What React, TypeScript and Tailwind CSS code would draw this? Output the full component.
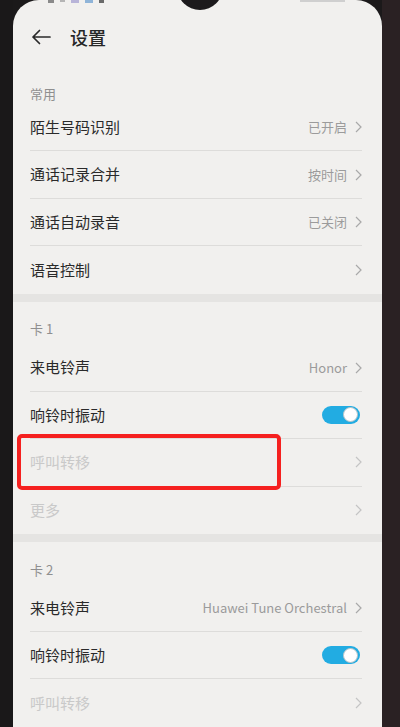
import React from "react";

const font = { fontFamily: '"Noto Sans CJK SC", "Noto Sans", Roboto, sans-serif' };

function Chevron({ light }: { light?: boolean }) {
  return (
    <svg width="7" height="12" viewBox="0 0 7 12" className="shrink-0">
      <path d="M1 1 L6 6 L1 11" fill="none" stroke={light ? "#c4c4c4" : "#a9a9a9"} strokeWidth="1.2" />
    </svg>
  );
}

function Toggle() {
  return (
    <div className="w-[38px] h-[18px] rounded-full bg-[#22ace2] flex items-center justify-end pr-[2px] mr-[2px]">
      <div className="w-[15px] h-[15px] rounded-full bg-white border border-[#b9c4c8]" />
    </div>
  );
}

type Row = { label: string; value?: string; toggle?: boolean; disabled?: boolean; last?: boolean };

function SettingRow({ label, value, toggle, disabled, last }: Row) {
  return (
    <div className="h-[47.5px] pl-[17px] pr-[20px]">
      <div className={`h-full flex items-center ${last ? "" : "border-b border-[#dddcda]"}`}>
        <span className={`text-[15px] flex-1 ${disabled ? "text-[#c9c9c9]" : "text-[#2a2a2a]"}`}>{label}</span>
        {toggle ? (
          <Toggle />
        ) : (
          <div className="flex items-center gap-[8px]">
            {value && <span className="text-[13px] text-[#9b9b9b]">{value}</span>}
            <Chevron light={disabled} />
          </div>
        )}
      </div>
    </div>
  );
}

function SectionHeader({ text }: { text: string }) {
  return (
    <div className="h-[42.5px] pl-[17px] flex items-end pb-[9px]">
      <span className="text-[13px] leading-[13px] text-[#8f8f8f]">{text}</span>
    </div>
  );
}

export default function App() {
  return (
    <div className="w-[400px] h-[727px] flex bg-[#1b191a] overflow-hidden" style={font}>
      <div className="w-[13px] bg-[#1a1819]" />
      <div className="flex-1 relative bg-[#f1f0ee] rounded-t-[26px] overflow-hidden flex flex-col">
        {/* notch */}
        <div className="absolute left-[164px] top-[-36px] w-[46px] h-[46px] rounded-full bg-[#1c1a1c]" />
        {/* status bar hints */}
        <div className="absolute left-[35px] top-0 flex gap-[6px]">
          <div className="w-[6px] h-[3px] bg-[#8a8a8a]" />
          <div className="w-[5px] h-[2px] bg-[#b5b5b5]" />
          <div className="w-[8px] h-[3px] bg-[#b8b4d8]" />
          <div className="w-[8px] h-[3px] bg-[#8fb4d8]" />
          <div className="w-[5px] h-[3px] bg-[#6a6a6a]" />
        </div>
        <div className="absolute left-[287px] top-0 w-[45px] h-[2px] bg-[#cfcfcf]" />

        {/* header */}
        <div className="h-[74px] flex items-center pl-[18px] shrink-0">
          <svg width="20" height="16" viewBox="0 0 20 16">
            <path d="M19 8 H2 M8.5 1.5 L2 8 L8.5 14.5" fill="none" stroke="#2a2a2a" strokeWidth="1.7" strokeLinecap="round" strokeLinejoin="round" />
          </svg>
          <span className="ml-[19px] text-[18px] font-medium text-[#262626]">设置</span>
        </div>
        <div className="h-[30px] pl-[17px] pt-[6px] shrink-0">
          <span className="text-[13px] leading-[13px] text-[#8f8f8f]">常用</span>
        </div>

        <SettingRow label="陌生号码识别" value="已开启" />
        <SettingRow label="通话记录合并" value="按时间" />
        <SettingRow label="通话自动录音" value="已关闭" />
        <SettingRow label="语音控制" last />

        <div className="h-[8px] bg-[#e5e4e2] shrink-0" />

        <SectionHeader text="卡 1" />
        <SettingRow label="来电铃声" value="Honor" />
        <SettingRow label="响铃时振动" toggle />
        <SettingRow label="呼叫转移" disabled />
        <SettingRow label="更多" disabled last />

        <div className="h-[8px] bg-[#e5e4e2] shrink-0" />

        <SectionHeader text="卡 2" />
        <SettingRow label="来电铃声" value="Huawei Tune Orchestral" />
        <SettingRow label="响铃时振动" toggle />
        <SettingRow label="呼叫转移" disabled last />

        {/* highlight box */}
        <div className="absolute left-[4px] top-[434px] w-[264px] h-[56px] border-[4px] border-[#f5201f] rounded-[5px]" />
      </div>
      <div className="w-[18px] bg-[#2a2123]" />
    </div>
  );
}
